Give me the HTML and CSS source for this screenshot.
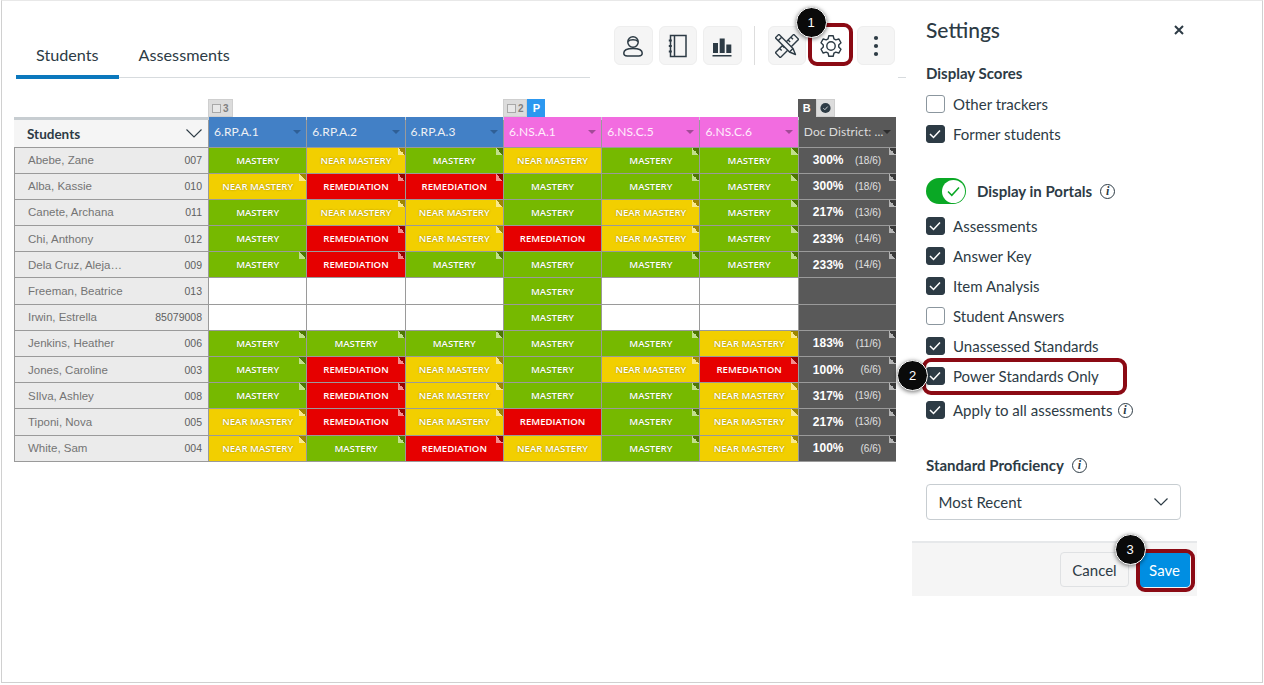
FILE: index.html
```html
<!DOCTYPE html>
<html lang="en">
<head>
    <meta charset="UTF-8">
    <title>Tracker Settings</title>
    <link rel="stylesheet" href="styles.css">
</head>
<body>
<div class="frame">
    <div class="main">
        <div class="topbar">
            <div class="tabs">
                <div class="tab active">Students</div>
                <div class="tab">Assessments</div>
            </div>
            <div class="toolbar">
                <div class="tool-btn">
                    <svg width="24" height="24" viewBox="0 0 24 24" fill="none" stroke="#2d3b45" stroke-width="1.5"><circle cx="12" cy="8" r="5.2"/><path d="M7 7.5c2-2.2 8-2.2 10 0"/><path d="M12 14.5c-5.5 0-9.2 1.6-9.2 4.6 0 1.8 1.5 3 3.4 3h11.6c1.900 0 3.400-1.200 3.400-3 0-3-3.700-4.600-9.200-4.600z"/></svg>
                </div>
                <div class="tool-btn">
                    <svg width="24" height="24" viewBox="0 0 24 24" fill="none" stroke="#2d3b45" stroke-width="1.500"><rect x="4.500" y="1.500" width="15.500" height="21"/><path d="M8.500 1.500v21"/><path d="M2.800 6.500h3M2.800 12h3M2.800 17.500h3" stroke-width="2"/></svg>
                </div>
                <div class="tool-btn">
                    <svg width="24" height="24" viewBox="0 0 24 24" fill="#2d3b45"><rect x="3" y="9" width="5" height="10"/><rect x="9.700" y="4.500" width="5" height="14.500"/><rect x="16.300" y="10.500" width="5" height="8.500"/><rect x="2.500" y="21" width="19" height="1.500"/></svg>
                </div>
                <div class="tool-divider"></div>
                <div class="tool-btn">
                    <svg width="24" height="24" viewBox="0 0 24 24" fill="#f5f5f5" stroke="#2d3b45" stroke-width="1.400" stroke-linejoin="round">
                        <g transform="rotate(45 12 12)"><rect x="8.500" y="-1" width="7" height="26"/><path d="M8.500 3h3M8.500 7h3M8.500 11h3M8.500 15h3M8.500 19h3" fill="none"/></g>
                        <g transform="rotate(-45 12 12)"><path d="M9.500 -2h5v20l-2.500 6-2.500-6z"/><path d="M9.500 2h5M9.500 18h5" fill="none"/></g>
                    </svg>
                </div>
                <div class="tool-btn plain">
                    <svg width="24" height="24" viewBox="0 0 24 24" fill="none" stroke="#2d3b45" stroke-width="1.400" stroke-linejoin="round"><path d="M9.820 1.730H14.180L14.920 4.770L16.800 5.850L19.800 4.970L21.990 8.760L19.720 10.910V13.090L21.990 15.240L19.800 19.030L16.800 18.150L14.920 19.230L14.180 22.270H9.820L9.080 19.230L7.200 18.150L4.200 19.030L2.010 15.240L4.280 13.090V10.910L2.010 8.760L4.200 4.970L7.200 5.850L9.080 4.770z"/><circle cx="12" cy="12" r="4.200"/></svg>
                </div>
                <div class="tool-btn">
                    <svg width="24" height="24" viewBox="0 0 24 24" fill="#2d3b45"><circle cx="12" cy="4" r="2.100"/><circle cx="12" cy="12" r="2.100"/><circle cx="12" cy="20" r="2.100"/></svg>
                </div>
            </div>
            <div class="topbar-end"></div>
        </div>

        <div class="tag-row">
            <div class="tag-group group-rp"><span class="tag"><i class="tag-box"></i>3</span></div>
            <div class="tag-group group-ns"><span class="tag"><i class="tag-box"></i>2</span><span class="tag tag-power">P</span></div>
            <div class="tag-group group-doc">
                <span class="tag tag-dark">B</span>
                <span class="tag tag-check"><svg width="14" height="14" viewBox="0 0 14 14"><circle cx="7" cy="7" r="6.500" fill="#2d3b45"/><path d="M4.200 7.200l2 2 3.600-4" fill="none" stroke="#cfd4d8" stroke-width="1.200"/></svg></span>
            </div>
        </div>

        <div class="grid">
            <div class="head head-students">Students
                <svg width="16" height="9" viewBox="0 0 16 9" fill="none" stroke="#2d3b45" stroke-width="1.100"><path d="M.5.5L8 8 15.500.5"/></svg>
            </div>
            <div class="head blue">6.RP.A.1<i class="caret"></i></div>
            <div class="head blue">6.RP.A.2<i class="caret"></i></div>
            <div class="head blue">6.RP.A.3<i class="caret"></i></div>
            <div class="head pink">6.NS.A.1<i class="caret"></i></div>
            <div class="head pink">6.NS.C.5<i class="caret"></i></div>
            <div class="head pink">6.NS.C.6<i class="caret"></i></div>
            <div class="head dark">Doc District: ...<i class="caret"></i></div>

            <div class="name"><span>Abebe, Zane</span><span>007</span></div>
            <div class="cell m">MASTERY</div>
            <div class="cell n fold">NEAR MASTERY</div>
            <div class="cell m fold">MASTERY</div>
            <div class="cell n">NEAR MASTERY</div>
            <div class="cell m fold">MASTERY</div>
            <div class="cell m fold">MASTERY</div>
            <div class="score fold"><b>300%</b><span>(18/6)</span></div>

            <div class="name"><span>Alba, Kassie</span><span>010</span></div>
            <div class="cell n fold">NEAR MASTERY</div>
            <div class="cell r fold">REMEDIATION</div>
            <div class="cell r fold">REMEDIATION</div>
            <div class="cell m">MASTERY</div>
            <div class="cell m fold">MASTERY</div>
            <div class="cell m fold">MASTERY</div>
            <div class="score fold"><b>300%</b><span>(18/6)</span></div>

            <div class="name"><span>Canete, Archana</span><span>011</span></div>
            <div class="cell m">MASTERY</div>
            <div class="cell n fold">NEAR MASTERY</div>
            <div class="cell n fold">NEAR MASTERY</div>
            <div class="cell m">MASTERY</div>
            <div class="cell n fold">NEAR MASTERY</div>
            <div class="cell m fold">MASTERY</div>
            <div class="score fold"><b>217%</b><span>(13/6)</span></div>

            <div class="name"><span>Chi, Anthony</span><span>012</span></div>
            <div class="cell m">MASTERY</div>
            <div class="cell r fold">REMEDIATION</div>
            <div class="cell n fold">NEAR MASTERY</div>
            <div class="cell r">REMEDIATION</div>
            <div class="cell n fold">NEAR MASTERY</div>
            <div class="cell m fold">MASTERY</div>
            <div class="score fold"><b>233%</b><span>(14/6)</span></div>

            <div class="name"><span>Dela Cruz, Aleja…</span><span>009</span></div>
            <div class="cell m fold">MASTERY</div>
            <div class="cell r fold">REMEDIATION</div>
            <div class="cell m fold">MASTERY</div>
            <div class="cell m">MASTERY</div>
            <div class="cell m fold">MASTERY</div>
            <div class="cell m fold">MASTERY</div>
            <div class="score fold"><b>233%</b><span>(14/6)</span></div>

            <div class="name"><span>Freeman, Beatrice</span><span>013</span></div>
            <div class="cell"></div>
            <div class="cell"></div>
            <div class="cell"></div>
            <div class="cell m">MASTERY</div>
            <div class="cell"></div>
            <div class="cell"></div>
            <div class="score"></div>

            <div class="name"><span>Irwin, Estrella</span><span>85079008</span></div>
            <div class="cell"></div>
            <div class="cell"></div>
            <div class="cell"></div>
            <div class="cell m">MASTERY</div>
            <div class="cell"></div>
            <div class="cell"></div>
            <div class="score"></div>

            <div class="name"><span>Jenkins, Heather</span><span>006</span></div>
            <div class="cell m fold">MASTERY</div>
            <div class="cell m fold">MASTERY</div>
            <div class="cell m fold">MASTERY</div>
            <div class="cell m">MASTERY</div>
            <div class="cell m fold">MASTERY</div>
            <div class="cell n fold">NEAR MASTERY</div>
            <div class="score fold"><b>183%</b><span>(11/6)</span></div>

            <div class="name"><span>Jones, Caroline</span><span>003</span></div>
            <div class="cell m fold">MASTERY</div>
            <div class="cell r fold">REMEDIATION</div>
            <div class="cell n fold">NEAR MASTERY</div>
            <div class="cell m">MASTERY</div>
            <div class="cell n fold">NEAR MASTERY</div>
            <div class="cell r fold">REMEDIATION</div>
            <div class="score fold"><b>100%</b><span>(6/6)</span></div>

            <div class="name"><span>SIlva, Ashley</span><span>008</span></div>
            <div class="cell m fold">MASTERY</div>
            <div class="cell r fold">REMEDIATION</div>
            <div class="cell n fold">NEAR MASTERY</div>
            <div class="cell m">MASTERY</div>
            <div class="cell m fold">MASTERY</div>
            <div class="cell n fold">NEAR MASTERY</div>
            <div class="score fold"><b>317%</b><span>(19/6)</span></div>

            <div class="name"><span>Tiponi, Nova</span><span>005</span></div>
            <div class="cell n fold">NEAR MASTERY</div>
            <div class="cell r fold">REMEDIATION</div>
            <div class="cell n fold">NEAR MASTERY</div>
            <div class="cell r">REMEDIATION</div>
            <div class="cell m fold">MASTERY</div>
            <div class="cell n fold">NEAR MASTERY</div>
            <div class="score fold"><b>217%</b><span>(13/6)</span></div>

            <div class="name"><span>White, Sam</span><span>004</span></div>
            <div class="cell n fold">NEAR MASTERY</div>
            <div class="cell m fold">MASTERY</div>
            <div class="cell r fold">REMEDIATION</div>
            <div class="cell n">NEAR MASTERY</div>
            <div class="cell m fold">MASTERY</div>
            <div class="cell n fold">NEAR MASTERY</div>
            <div class="score fold"><b>100%</b><span>(6/6)</span></div>
        </div>
    </div>

    <div class="panel">
        <div class="panel-body">
            <div class="panel-title">
                <span>Settings</span>
                <svg width="10" height="10" viewBox="0 0 10 10" stroke="#2d3b45" stroke-width="2"><path d="M1 1l8 8M9 1l-8 8"/></svg>
            </div>
            <div class="section-label">Display Scores</div>
            <div class="checks first">
                <div class="check-row"><i class="box"></i>Other trackers</div>
                <div class="check-row"><i class="box on"><svg width="12" height="10" viewBox="0 0 12 10" fill="none" stroke="#fff" stroke-width="1.500"><path d="M1 5l3.500 3.500L11 1.500"/></svg></i>Former students</div>
            </div>
            <div class="toggle-row">
                <div class="toggle"><div class="knob"><svg width="13" height="11" viewBox="0 0 13 11" fill="none" stroke="#0aa825" stroke-width="1.500"><path d="M1 5.500l3.800 3.800L12 1.500"/></svg></div></div>
                <b>Display in Portals</b><i class="info">i</i>
            </div>
            <div class="checks portals">
                <div class="check-row"><i class="box on"><svg width="12" height="10" viewBox="0 0 12 10" fill="none" stroke="#fff" stroke-width="1.500"><path d="M1 5l3.500 3.500L11 1.500"/></svg></i>Assessments</div>
                <div class="check-row"><i class="box on"><svg width="12" height="10" viewBox="0 0 12 10" fill="none" stroke="#fff" stroke-width="1.500"><path d="M1 5l3.500 3.500L11 1.500"/></svg></i>Answer Key</div>
                <div class="check-row"><i class="box on"><svg width="12" height="10" viewBox="0 0 12 10" fill="none" stroke="#fff" stroke-width="1.500"><path d="M1 5l3.500 3.500L11 1.500"/></svg></i>Item Analysis</div>
                <div class="check-row"><i class="box"></i>Student Answers</div>
                <div class="check-row"><i class="box on"><svg width="12" height="10" viewBox="0 0 12 10" fill="none" stroke="#fff" stroke-width="1.500"><path d="M1 5l3.500 3.500L11 1.500"/></svg></i>Unassessed Standards</div>
                <div class="check-row"><i class="box on"><svg width="12" height="10" viewBox="0 0 12 10" fill="none" stroke="#fff" stroke-width="1.500"><path d="M1 5l3.500 3.500L11 1.500"/></svg></i>Power Standards Only</div>
                <div class="check-row apply"><i class="box on"><svg width="12" height="10" viewBox="0 0 12 10" fill="none" stroke="#fff" stroke-width="1.500"><path d="M1 5l3.500 3.500L11 1.500"/></svg></i>Apply to all assessments<i class="info">i</i></div>
            </div>
            <div class="section-label proficiency">Standard Proficiency<i class="info">i</i></div>
            <div class="select">
                <span>Most Recent</span>
                <svg width="14" height="8" viewBox="0 0 14 8" fill="none" stroke="#2d3b45" stroke-width="1.200"><path d="M.5.5L7 7 13.500.5"/></svg>
            </div>
        </div>
        <div class="panel-footer">
            <div class="btn btn-cancel">Cancel</div>
            <div class="btn btn-save">Save</div>
        </div>
    </div>

    <!-- callouts drawn over the screenshot -->
    <div class="highlight hl-gear"></div>
    <div class="highlight hl-power"></div>
    <div class="highlight hl-save"></div>
    <div class="callout c1">1</div>
    <div class="callout c2">2</div>
    <div class="callout c3">3</div>
</div>
</body>
</html>
```

FILE: styles.css
```css
* {
    box-sizing: border-box;
}

body {
    margin: 0;
    background-color: #ffffff;
    font-family: Lato, "Liberation Sans", sans-serif;
    color: #2d3b45;
}

.frame {
    position: relative;
    width: 1264px;
    height: 685px;
    display: flex;
    overflow: hidden;
}

/* thin edge around the screenshot */
.frame::after {
    content: "";
    position: absolute;
    top: 0;
    left: 1px;
    right: 1px;
    bottom: 2px;
    border: 1px solid #d0d0d0;
    border-top-color: #e8e8e8;
    pointer-events: none;
}

.main {
    width: 912px;
    flex: none;
    padding-left: 14px;
}

/* top bar */
.topbar {
    display: flex;
    height: 78px;
    margin-left: 2px;
    width: 890px;
}

.tabs {
    width: 574px;
    display: flex;
    align-items: flex-end;
    border-bottom: 1.5px solid #d7dbde;
}

.tab {
    height: 46px;
    margin-bottom: -1.5px;
    padding: 10px 20px 0;
    font-size: 16.2px;
    line-height: 24px;
    border-bottom: 4px solid transparent;
}

.tab.active {
    border-bottom-color: #0b78bd;
}

.toolbar {
    display: flex;
    gap: 6px;
    margin: 26px 0 0 24px;
    height: 39px;
}

.tool-btn {
    width: 38.5px;
    height: 39px;
    display: flex;
    align-items: center;
    justify-content: center;
    background-color: #f5f5f5;
    border: 1px solid #eeeeee;
    border-radius: 6px;
}

.tool-btn.plain {
    background-color: #ffffff;
    border-color: #ffffff;
}

.tool-divider {
    width: 1px;
    background-color: #dddddd;
    margin: 0 6.500px;
}

.topbar-end {
    flex: none;
    width: 8px;
    height: 78px;
    margin-left: 3px;
    border-bottom: 1.5px solid #d7dbde;
}

/* table */
.tag-row,
.grid {
    display: grid;
    grid-template-columns: 193px repeat(7, 97.3px);
    column-gap: 1px;
    padding: 0 1px;
    width: 882.1px;
}

.tag-row {
    height: 18px;
    margin-top: 21px;
}

.tag-group {
    display: flex;
    align-items: flex-start;
    margin-left: -1px;
}

.group-rp { grid-column: 2; }
.group-ns { grid-column: 5; }
.group-doc { grid-column: 8; }

.tag {
    height: 18px;
    min-width: 18px;
    padding: 0 3px;
    display: flex;
    align-items: center;
    justify-content: center;
    gap: 2px;
    background-color: #dcdcdc;
    border: 1px solid #cfcfcf;
    color: #808080;
    font: bold 10px "Liberation Sans", sans-serif;
}

.tag-box {
    width: 9px;
    height: 9px;
    border: 1px solid #a8a8a8;
    background-color: #e8e8e8;
}

.tag-power {
    background-color: #2c98f0;
    border-color: #2c98f0;
    color: #ffffff;
    font-size: 11px;
}

.tag-dark {
    background-color: #595959;
    border-color: #595959;
    color: #ffffff;
    font-size: 11px;
}

.tag-check {
    width: 19px;
}

.grid {
    grid-auto-rows: 25.2px;
    grid-template-rows: 29.5px;
    row-gap: 1px;
    padding-bottom: 1px;
    background: linear-gradient(#c7cdd1 0 3px, #9a9a9a 3px);
}

.head {
    position: relative;
    display: flex;
    align-items: center;
    padding-left: 5px;
    font-size: 12px;
    color: #eef0f4;
    letter-spacing: .1px;
}

.head-students {
    margin: 3px 0 0 -1px;
    padding: 1px 6px 0 13px;
    justify-content: space-between;
    background-color: #f5f5f5;
    color: #2d3b45;
    font-weight: bold;
    font-size: 13.5px;
    letter-spacing: 0;
}

.blue { background-color: #4280c6; }
.pink { background-color: #f26ce0; color: #ffeefc; }
.dark { background-color: #595959; color: #dddddd; }

.caret {
    position: absolute;
    right: 5px;
    top: 13px;
    border: 4px solid transparent;
    border-top-color: #2f5f96;
    border-bottom-width: 0;
}

.pink .caret { border-top-color: #a34a98; }
.dark .caret { border-top-color: #2d2d2d; }

.name {
    display: flex;
    justify-content: space-between;
    align-items: center;
    padding: 0 6px 0 13px;
    background-color: #ebebeb;
    color: #747474;
    font: 11.500px "Liberation Sans", sans-serif;
}

.name span:last-child {
    font-size: 10.500px;
    color: #5f5f5f;
}

.cell {
    position: relative;
    display: flex;
    align-items: center;
    justify-content: center;
    background-color: #ffffff;
    color: #ffffff;
    font: 600 9.600px "Open Sans", sans-serif;
}

.m { background-color: #76b900; text-shadow: 0 0 1px rgba(0, 0, 0, .25); }
.n { background-color: #f2cf00; text-shadow: 0 0 2px rgba(0, 0, 0, .35); }
.r { background-color: #e60000; }

.score {
    position: relative;
    display: flex;
    align-items: center;
    justify-content: space-between;
    padding: 0 15px 0 14px;
    background-color: #595959;
    color: #ffffff;
    font: 12px "Liberation Sans", sans-serif;
}

.score span {
    font-size: 10px;
    color: #e0e0e0;
}

.fold::after {
    content: "";
    position: absolute;
    top: 0;
    right: 0;
    width: 7px;
    height: 7px;
    background: linear-gradient(45deg, rgba(255, 255, 255, .55) 50%, rgba(0, 0, 0, .35) 50%);
}

/* settings panel */
.panel {
    width: 285px;
    height: 596px;
    flex: none;
    display: flex;
    flex-direction: column;
}

.panel-body {
    flex: 1;
    padding: 15px 13px 0 14px;
}

.panel-title {
    display: flex;
    justify-content: space-between;
    align-items: center;
    height: 30px;
    font-size: 21px;
    font-weight: 500;
    line-height: 30px;
}

.section-label {
    margin-top: 18px;
    font-size: 15px;
    line-height: 20px;
    font-weight: bold;
    display: flex;
    align-items: center;
}

.checks.first {
    margin-top: 6px;
}

.checks.portals {
    margin-top: 7px;
}

.check-row {
    display: flex;
    align-items: center;
    height: 30px;
    font-size: 15px;
}

.check-row.apply {
    margin-top: 4px;
}

.check-row .info {
    margin-left: 5px;
}

.box {
    flex: none;
    width: 18.500px;
    height: 18.500px;
    margin-right: 8.500px;
    border: 1px solid #8b969e;
    border-radius: 3px;
    display: flex;
    align-items: center;
    justify-content: center;
}

.box.on {
    background-color: #2d3b45;
    border-color: #2d3b45;
}

.toggle-row {
    display: flex;
    align-items: center;
    height: 26px;
    margin-top: 29px;
    font-size: 15px;
}

.toggle {
    width: 40px;
    height: 26px;
    margin-right: 11px;
    padding: 1.500px;
    border-radius: 13px;
    background-color: #0aa825;
    display: flex;
    justify-content: flex-end;
}

.knob {
    width: 23px;
    height: 23px;
    border-radius: 50%;
    background-color: #ffffff;
    display: flex;
    align-items: center;
    justify-content: center;
}

.info {
    flex: none;
    width: 15px;
    height: 15px;
    margin-left: 8px;
    border: 1px solid #2d3b45;
    border-radius: 50%;
    display: flex;
    align-items: center;
    justify-content: center;
    font: italic bold 12px "Liberation Serif", serif;
}

.section-label.proficiency {
    margin-top: 30px;
}

.select {
    width: 255.500px;
    height: 36px;
    margin: 9px 0 0 -0.5px;
    padding: 0 12.500px 0 12px;
    display: flex;
    align-items: center;
    justify-content: space-between;
    border: 1px solid #c7cdd1;
    border-radius: 4px;
    font-size: 15px;
}

.panel-footer {
    height: 55px;
    flex: none;
    display: flex;
    justify-content: flex-end;
    align-items: center;
    gap: 10px;
    padding-right: 7px;
    background-color: #f5f5f5;
    border-top: 2px solid #e6e8ea;
}

.btn {
    height: 35px;
    display: flex;
    align-items: center;
    justify-content: center;
    border-radius: 4px;
    font-size: 15px;
}

.btn-cancel {
    width: 69px;
    border: 1px solid #dfe1e3;
    background-color: #f5f5f5;
}

.btn-save {
    width: 51px;
    background-color: #008ee2;
    color: #ffffff;
}

/* overlays */
.highlight {
    position: absolute;
    border: 4px solid #8b0a14;
    border-radius: 9px;
}

.hl-gear {
    left: 808px;
    top: 23px;
    width: 45px;
    height: 43px;
}

.hl-power {
    left: 922px;
    top: 358px;
    width: 205px;
    height: 37px;
}

.hl-save {
    left: 1136px;
    top: 549px;
    width: 59px;
    height: 43px;
}

.callout {
    position: absolute;
    width: 31px;
    height: 31px;
    display: flex;
    align-items: center;
    justify-content: center;
    background-color: #0a0a0a;
    border: 1px solid #ffffff;
    border-radius: 50%;
    box-shadow: 0 1px 4px rgba(0, 0, 0, .55);
    color: #ffffff;
    font: 13px "Liberation Sans", sans-serif;
}

.c1 { left: 795.500px; top: 6.500px; }
.c2 { left: 897px; top: 360px; }
.c3 { left: 1114.500px; top: 533.500px; }
```
